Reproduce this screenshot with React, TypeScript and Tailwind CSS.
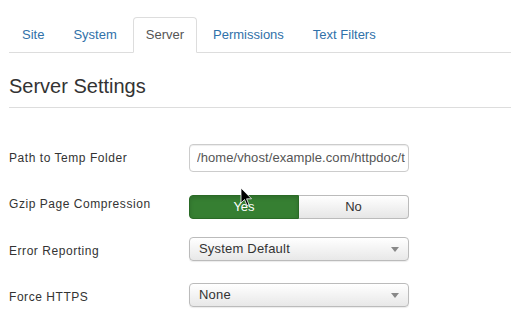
import React from "react";

const tabs = ["Site", "System", "Server", "Permissions", "Text Filters"];

const Caret = () => (
  <svg width="8" height="5" viewBox="0 0 8 5" className="shrink-0">
    <path d="M0 0 L8 0 L4 5 Z" fill="#888" />
  </svg>
);

const Select = ({ value }: { value: string }) => (
  <div className="flex h-[24px] w-[220px] items-center justify-between rounded-[4px] border border-[#bbb] bg-gradient-to-b from-white to-[#e8e8e8] pl-[9px] pr-[9px] text-[13px] tracking-[0.2px] text-[#333] shadow-[0_1px_1px_rgba(0,0,0,0.08)]">
    <span>{value}</span>
    <Caret />
  </div>
);

const App = () => {
  return (
    <div
      className="relative h-[332px] w-[511px] overflow-hidden bg-white pl-[9px]"
      style={{ fontFamily: '"Liberation Sans", Arial, sans-serif' }}
    >
      {/* Tabs */}
      <ul className="mt-[17px] flex h-[36px] border-b border-[#ddd] text-[13px]">
        {tabs.map((tab) => {
          const active = tab === "Server";
          return (
            <li
              key={tab}
              className={
                active
                  ? "-mb-px mr-[3px] flex h-[36px] items-center rounded-t-[4px] border border-b-white border-[#ddd] bg-white px-[12px] text-[#555]"
                  : "mr-[3px] flex h-[35px] items-center border border-transparent px-[12px] text-[#3071a9]"
              }
            >
              {tab}
            </li>
          );
        })}
      </ul>

      {/* Heading */}
      <h2 className="mt-[20px] border-b border-[#ddd] pb-[8px] text-[20px] leading-[26px] text-[#333]">
        Server Settings
      </h2>

      {/* Form */}
      <div className="mt-[36px] text-[12px] text-[#333]">
        <div className="flex">
          <label className="w-[180px] pt-[5px] leading-[18px] tracking-[0.55px]">Path to Temp Folder</label>
          <div className="flex h-[28px] w-[220px] items-center rounded-[4px] border border-[#ccc] pl-[7px] pr-[3px] text-[13px] tracking-[0.08px] text-[#555] shadow-[inset_0_1px_1px_rgba(0,0,0,0.075)]">
            <span className="overflow-hidden whitespace-nowrap">/home/vhost/example.com/httpdoc/tmp</span>
          </div>
        </div>

        <div className="mt-[18px] flex">
          <label className="w-[180px] pt-[5px] leading-[18px] tracking-[0.55px]">Gzip Page Compression</label>
          <div className="mt-[5px] flex h-[24px] w-[220px] text-[13px]">
            <div className="flex w-[110px] items-center justify-center rounded-l-[4px] border border-[#2a6a26] bg-[#367f32] text-white shadow-[inset_0_2px_4px_rgba(0,0,0,0.15)]">
              Yes
            </div>
            <div className="flex w-[110px] items-center justify-center rounded-r-[4px] border border-l-0 border-[#bbb] bg-gradient-to-b from-white to-[#e6e6e6] text-[#333]">
              No
            </div>
          </div>
        </div>

        <div className="mt-[18px] flex">
          <label className="w-[180px] pt-[5px] leading-[18px] tracking-[0.55px]">Error Reporting</label>
          <Select value="System Default" />
        </div>

        <div className="mt-[22px] flex">
          <label className="w-[180px] pt-[5px] leading-[18px] tracking-[0.55px]">Force HTTPS</label>
          <Select value="None" />
        </div>
      </div>

      {/* Mouse cursor */}
      <svg
        className="absolute left-[240px] top-[187px]"
        width="13"
        height="21"
        viewBox="0 0 13 21"
      >
        <path
          d="M1 1 L1 16 L4.5 12.5 L7 18.5 L9 17.6 L6.6 11.8 L11.5 11.8 Z"
          fill="#000"
          stroke="#fff"
          strokeWidth="0.8"
          strokeLinejoin="round"
        />
      </svg>
    </div>
  );
};

export default App;
